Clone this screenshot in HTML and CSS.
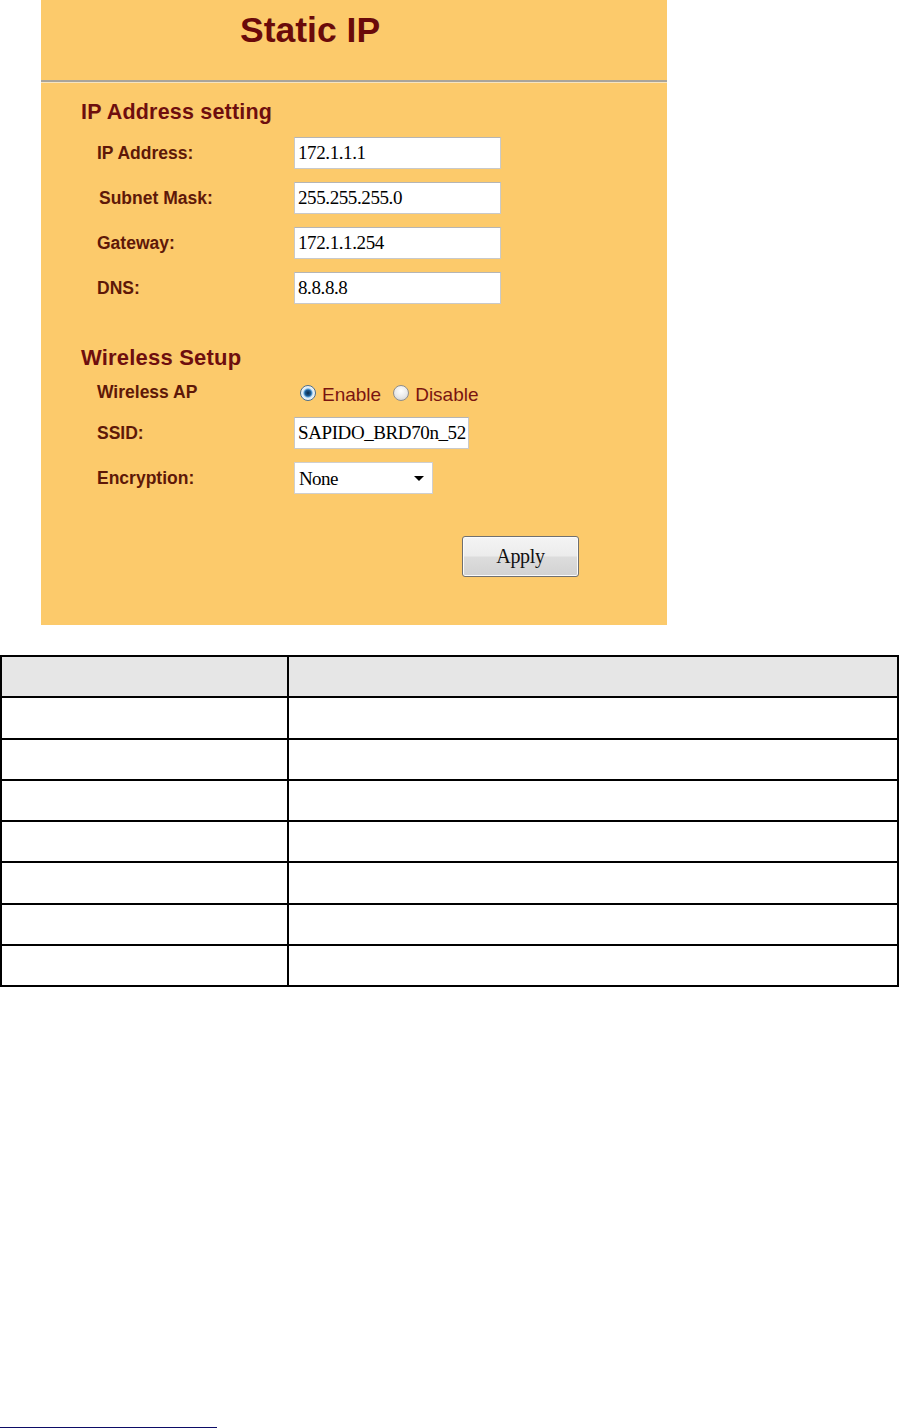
FILE: index.html
```html
<!DOCTYPE html>
<html lang="en">
<head>
<meta charset="utf-8">
<title>Static IP</title>
<link rel="stylesheet" href="styles.css">
</head>
<body>
<div class="panel">
  <h1 class="title">Static IP</h1>
  <div class="rule"></div>
  <h2 class="section">IP Address setting</h2>
  <div class="form">
    <label class="lbl">IP Address:</label>
    <input class="field" type="text" value="172.1.1.1">
    <label class="lbl lbl-shift">Subnet Mask:</label>
    <input class="field" type="text" value="255.255.255.0">
    <label class="lbl">Gateway:</label>
    <input class="field" type="text" value="172.1.1.254">
    <label class="lbl">DNS:</label>
    <input class="field" type="text" value="8.8.8.8">
  </div>
  <h2 class="section section-wireless">Wireless Setup</h2>
  <div class="form form-wireless">
    <span class="lbl">Wireless AP</span>
    <div class="radios">
      <label class="radio"><input class="radio-input" type="radio" name="ap" checked><span class="radio-text">Enable</span></label>
      <label class="radio"><input class="radio-input" type="radio" name="ap"><span class="radio-text">Disable</span></label>
    </div>
    <label class="lbl">SSID:</label>
    <input class="field field-ssid" type="text" value="SAPIDO_BRD70n_52">
    <label class="lbl">Encryption:</label>
    <div class="select-wrap">
      <select class="select"><option>None</option></select>
    </div>
  </div>
  <div class="actions">
    <button class="btn" type="button">Apply</button>
  </div>
</div>

<table class="grid">
  <tr class="head"><td class="c1"></td><td class="c2"></td></tr>
  <tr><td class="c1"></td><td class="c2"></td></tr>
  <tr><td class="c1"></td><td class="c2"></td></tr>
  <tr><td class="c1"></td><td class="c2"></td></tr>
  <tr><td class="c1"></td><td class="c2"></td></tr>
  <tr><td class="c1"></td><td class="c2"></td></tr>
  <tr><td class="c1"></td><td class="c2"></td></tr>
  <tr><td class="c1"></td><td class="c2"></td></tr>
</table>

<div class="footnote-rule"></div>
</body>
</html>
```

FILE: styles.css
```css
html, body {
  margin: 0;
  padding: 0;
  background: #ffffff;
}

body {
  font-family: "Liberation Sans", Arial, sans-serif;
}

.panel {
  margin-left: 41px;
  width: 626px;
  background: #fcca6b;
  padding: 0 0 48px 0;
  box-sizing: border-box;
}

.title {
  margin: 0;
  padding: 10px 0 0 199px;
  font-size: 35.5px;
  line-height: 40px;
  font-weight: bold;
  color: #6a0a0a;
}

.rule {
  margin-top: 30px;
  height: 0;
  border-top: 2px solid #a9a49a;
  border-bottom: 1px solid #f6e4bf;
}

.section {
  margin: 17px 0 0 40px;
  font-size: 21.5px;
  line-height: 24px;
  font-weight: bold;
  color: #6e0e0e;
  letter-spacing: 0.2px;
}

.section-wireless {
  margin-top: 42px;
  font-size: 22px;
}

.form {
  margin: 13px 0 0 56px;
  display: grid;
  grid-template-columns: 197px auto;
  row-gap: 13px;
  align-items: center;
}

.form-wireless {
  margin-top: 10px;
}

.lbl {
  font-size: 17.5px;
  font-weight: bold;
  color: #5e1808;
  line-height: 20px;
}

.lbl-shift {
  padding-left: 2px;
}

.field {
  width: 207px;
  height: 32px;
  box-sizing: border-box;
  margin: 0;
  padding: 0 0 0 3px;
  border: 1px solid #c9c9c9;
  border-top-color: #b5b5b5;
  background: #ffffff;
  font-family: "Liberation Serif", "Times New Roman", serif;
  font-size: 19px;
  letter-spacing: -0.4px;
  color: #000000;
  outline: none;
}

.field-ssid {
  width: 175px;
}

.radios {
  display: flex;
  align-items: center;
  height: 24px;
  box-sizing: border-box;
  padding-left: 6px;
  padding-top: 2px;
}

.radio {
  display: flex;
  align-items: center;
  font-size: 19px;
  line-height: 20px;
  color: #7a1410;
  margin-right: 12px;
}

.radio-text {
  padding-top: 4px;
}

.radio-input {
  -webkit-appearance: none;
  appearance: none;
  width: 16px;
  height: 16px;
  margin: 0 6px 0 0;
  border-radius: 50%;
  border: 1px solid #8e8e8e;
  background: radial-gradient(circle at 50% 35%, #ffffff 0%, #e9e9e9 55%, #c8c8c8 100%);
  box-sizing: border-box;
}

.radio-input:checked {
  border-color: #4a6f8f;
  background: radial-gradient(circle at 50% 50%, #0d2a48 0px, #1e5c96 3px, #5fa6de 4px, #d8e8f4 5px, #f4f4f4 7px);
}

.select-wrap {
  position: relative;
  width: 139px;
  height: 32px;
}

.select {
  -webkit-appearance: none;
  appearance: none;
  width: 139px;
  height: 32px;
  box-sizing: border-box;
  margin: 0;
  padding: 0 0 0 4px;
  border: 1px solid #cfcfcf;
  border-radius: 0;
  background: #ffffff;
  font-family: "Liberation Serif", "Times New Roman", serif;
  font-size: 19px;
  letter-spacing: -0.6px;
  color: #000000;
  outline: none;
}

.select-wrap::after {
  content: "";
  position: absolute;
  right: 9px;
  top: 14px;
  width: 0;
  height: 0;
  border-left: 5px solid transparent;
  border-right: 5px solid transparent;
  border-top: 5px solid #000000;
  pointer-events: none;
}

.actions {
  margin-top: 42px;
  padding-left: 421px;
}

.btn {
  width: 117px;
  height: 41px;
  margin: 0;
  padding: 0;
  border: 1px solid #707070;
  border-radius: 3px;
  box-shadow: inset 0 0 0 1px #fbfbfb;
  background: linear-gradient(to bottom, #f4f4f4 0%, #ececec 48%, #dcdcdc 52%, #d2d2d2 100%);
  font-family: "Liberation Serif", "Times New Roman", serif;
  font-size: 20px;
  letter-spacing: -0.3px;
  color: #111111;
}

.grid {
  margin-top: 30px;
  width: 899px;
  border-collapse: collapse;
  table-layout: fixed;
}

.grid td {
  border: 2px solid #000000;
  height: 39.3px;
  padding: 0;
}

.grid .c1 {
  width: 285px;
}

.grid .head td {
  background: #e6e6e6;
}

.footnote-rule {
  margin-top: 440px;
  width: 217px;
  height: 1px;
  background: #0c0c66;
}
```
